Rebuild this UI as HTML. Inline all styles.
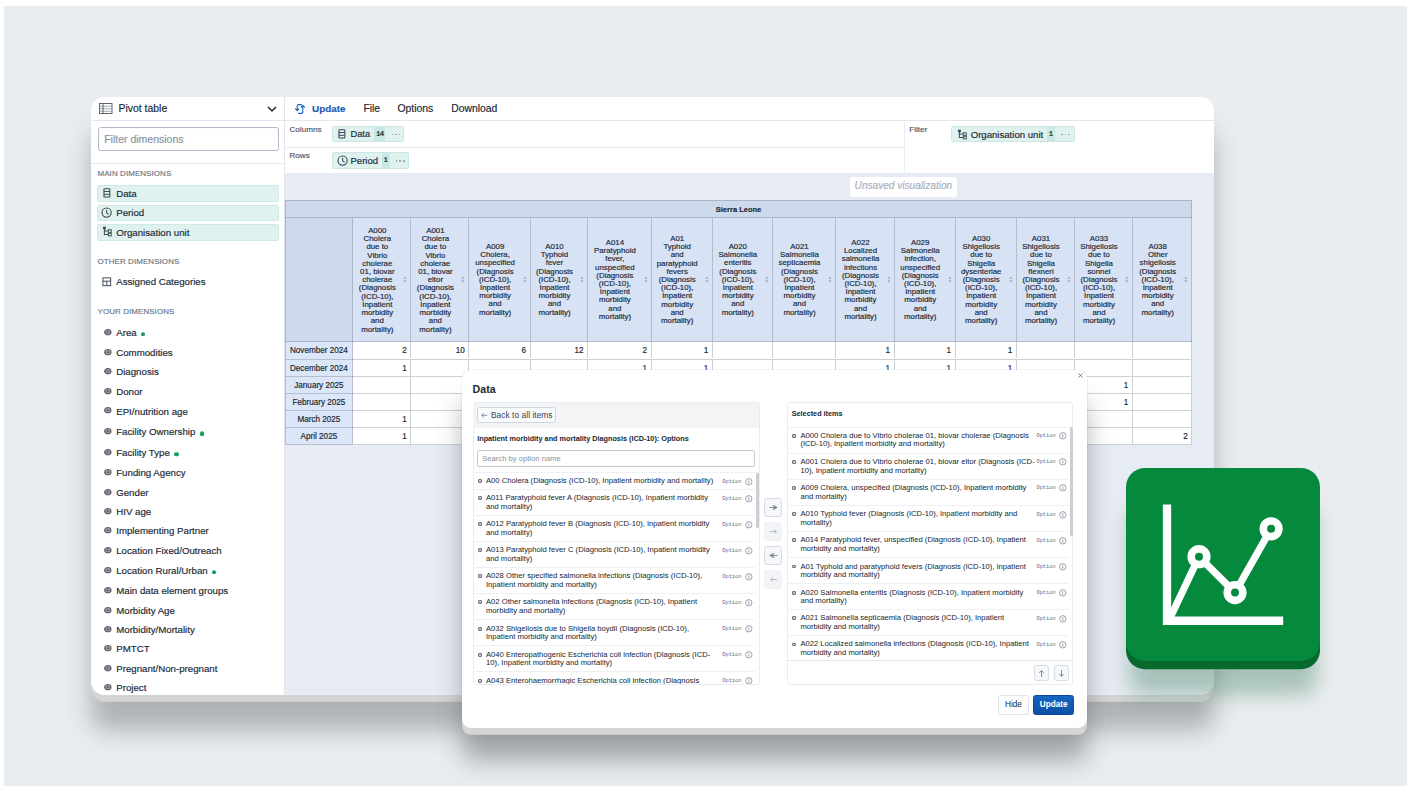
<!DOCTYPE html>
<html lang="en"><head><meta charset="utf-8"><title>Data Visualizer</title>
<style>*{box-sizing:border-box;margin:0;padding:0}
html,body{width:1412px;height:796px;overflow:hidden;background:#fff}
body{font-family:"Liberation Sans",sans-serif;color:#212934;position:relative}
.abs{position:absolute}
#bg{left:3.7px;top:5.5px;width:1402.9px;height:780px;background:#eaedf0}
#cardshadow{display:none}
#card{left:91px;top:97px;width:1123px;height:598px;background:#fff;border-radius:14px;box-shadow:0 6.8px 0 #d3d4d3,0 35px 24px rgba(58,62,68,.34)}
#cardin{left:0;top:0;width:1123px;height:598px;border-radius:14px;overflow:hidden}
#side{left:0;top:0;width:193.6px;height:598px;background:#fff;border-right:1px solid #e3e6ea}
#main{left:194px;top:0;width:929px;height:598px;background:#e7ebf3}
.t{position:absolute;white-space:nowrap;line-height:1;transform:translateY(-50%)}
body{-webkit-text-stroke:.17px currentColor}
.sec{font-size:7.95px;color:#6c7787;letter-spacing:.1px}
.dim{font-size:9.7px;color:#212934}
.chipL{position:absolute;left:5.9px;width:182px;height:16.5px;background:#dff2ef;border:.6px solid #cfe9e5;border-radius:1.5px}
svg{position:absolute;overflow:visible}
</style></head>
<body>
<div id="bg" class="abs"></div>
<div id="cardshadow" class="abs"></div>
<div id="card" class="abs"><div id="cardin" class="abs">
<div id="side" class="abs">
<svg style="left:8.3px;top:6.2px" width="13.5" height="11" viewBox="0 0 27 22"><rect x="1" y="1" width="25" height="20" fill="#fff" stroke="#5a6473" stroke-width="2"/><path d="M1 6.5H26M1 11.5H26M1 16.5H26" stroke="#8a93a0" stroke-width="1.6" fill="none"/><path d="M8 1V21" stroke="#5a6473" stroke-width="2"/></svg>
<div class="t" style="left:27.5px;top:12.4px;font-size:10.45px">Pivot table</div>
<svg style="left:176.3px;top:9.3px" width="10" height="6" viewBox="0 0 10 6"><path d="M1 1L5 4.8L9 1" fill="none" stroke="#2c3644" stroke-width="1.7"/></svg>
<div class="abs" style="left:0;top:23.2px;width:193px;height:1px;background:#e4e7eb"></div>
<div class="abs" style="left:6.5px;top:30.0px;width:181.2px;height:23.6px;border:1px solid #b3bccb;border-radius:2.5px;background:#fff;box-shadow:inset 0 0 1px rgba(48,54,60,.15)"></div>
<div class="t" style="left:13.2px;top:42.0px;font-size:10.5px;color:#8a94a3">Filter dimensions</div>
<div class="abs" style="left:0;top:66.0px;width:193px;height:1px;background:#e8ebee"></div>
<div class="t sec" style="left:6.5px;top:76.6px">MAIN DIMENSIONS</div>
<div class="chipL" style="top:88.2px"></div>
<svg style="left:11.1px;top:91.1px" width="9.8" height="9.8" viewBox="0 0 16 16"><rect x="3.2" y="1.2" width="9.6" height="13.6" rx="1" fill="none" stroke="#3a4a52" stroke-width="1.8"/><path d="M3.2 5.7H12.8M3.2 10.3H12.8" stroke="#3a4a52" stroke-width="1.6"/></svg>
<div class="t dim" style="left:25.2px;top:96.9px">Data</div>
<div class="chipL" style="top:107.6px"></div>
<svg style="left:10.3px;top:109.9px" width="11.2" height="11.2" viewBox="0 0 16 16"><circle cx="8" cy="8" r="6.6" fill="none" stroke="#3a4a52" stroke-width="1.6"/><path d="M8 4V8.3L10.8 10.4" fill="none" stroke="#3a4a52" stroke-width="1.5"/></svg>
<div class="t dim" style="left:25.2px;top:116.3px">Period</div>
<div class="chipL" style="top:127.1px"></div>
<svg style="left:10.6px;top:129.2px" width="10.8" height="10.8" viewBox="0 0 16 16"><path d="M3.5 4.5V12.5H9M3.5 7.5H9" fill="none" stroke="#3a4a52" stroke-width="1.5"/><rect x="1.5" y="1" width="4.2" height="3.8" fill="#3a4a52"/><rect x="9.3" y="5.6" width="4.4" height="3.8" fill="none" stroke="#3a4a52" stroke-width="1.4"/><rect x="9.3" y="10.8" width="4.4" height="3.8" fill="none" stroke="#3a4a52" stroke-width="1.4"/></svg>
<div class="t dim" style="left:25.2px;top:135.8px">Organisation unit</div>
<div class="t sec" style="left:6.5px;top:165.4px">OTHER DIMENSIONS</div>
<svg style="left:11.2px;top:180.4px" width="9.6" height="9.6" viewBox="0 0 16 16"><rect x="1.5" y="1.5" width="13" height="13" fill="none" stroke="#2f3a48" stroke-width="1.5"/><path d="M1.5 7H14.5M8 7V14.5" stroke="#2f3a48" stroke-width="1.5"/></svg>
<div class="t dim" style="left:25.2px;top:185.3px">Assigned Categories</div>
<div class="t sec" style="left:6.5px;top:214.8px">YOUR DIMENSIONS</div>
<svg style="left:12.5px;top:232.1px" width="7.6" height="6.4" viewBox="0 0 19 16"><ellipse cx="9.5" cy="8" rx="8" ry="6.6" fill="#a9aeb6" stroke="#5b626d" stroke-width="2.6"/><path d="M2 8H17M9.5 2V14" stroke="#5b626d" stroke-width="2.2"/></svg>
<div class="t dim" style="left:25.2px;top:236.2px">Area<span style="display:inline-block;width:4.2px;height:4.2px;border-radius:50%;background:#10a05a;margin-left:4.5px;vertical-align:-0.2px"></span></div>
<svg style="left:12.5px;top:252.0px" width="7.6" height="6.4" viewBox="0 0 19 16"><ellipse cx="9.5" cy="8" rx="8" ry="6.6" fill="#a9aeb6" stroke="#5b626d" stroke-width="2.6"/><path d="M2 8H17M9.5 2V14" stroke="#5b626d" stroke-width="2.2"/></svg>
<div class="t dim" style="left:25.2px;top:256.1px">Commodities</div>
<svg style="left:12.5px;top:271.3px" width="7.6" height="6.4" viewBox="0 0 19 16"><ellipse cx="9.5" cy="8" rx="8" ry="6.6" fill="#a9aeb6" stroke="#5b626d" stroke-width="2.6"/><path d="M2 8H17M9.5 2V14" stroke="#5b626d" stroke-width="2.2"/></svg>
<div class="t dim" style="left:25.2px;top:275.4px">Diagnosis</div>
<svg style="left:12.5px;top:290.7px" width="7.6" height="6.4" viewBox="0 0 19 16"><ellipse cx="9.5" cy="8" rx="8" ry="6.6" fill="#a9aeb6" stroke="#5b626d" stroke-width="2.6"/><path d="M2 8H17M9.5 2V14" stroke="#5b626d" stroke-width="2.2"/></svg>
<div class="t dim" style="left:25.2px;top:294.8px">Donor</div>
<svg style="left:12.5px;top:310.4px" width="7.6" height="6.4" viewBox="0 0 19 16"><ellipse cx="9.5" cy="8" rx="8" ry="6.6" fill="#a9aeb6" stroke="#5b626d" stroke-width="2.6"/><path d="M2 8H17M9.5 2V14" stroke="#5b626d" stroke-width="2.2"/></svg>
<div class="t dim" style="left:25.2px;top:314.5px">EPI/nutrition age</div>
<svg style="left:12.5px;top:331.3px" width="7.6" height="6.4" viewBox="0 0 19 16"><ellipse cx="9.5" cy="8" rx="8" ry="6.6" fill="#a9aeb6" stroke="#5b626d" stroke-width="2.6"/><path d="M2 8H17M9.5 2V14" stroke="#5b626d" stroke-width="2.2"/></svg>
<div class="t dim" style="left:25.2px;top:335.4px">Facility Ownership<span style="display:inline-block;width:4.2px;height:4.2px;border-radius:50%;background:#10a05a;margin-left:4.5px;vertical-align:-0.2px"></span></div>
<svg style="left:12.5px;top:351.8px" width="7.6" height="6.4" viewBox="0 0 19 16"><ellipse cx="9.5" cy="8" rx="8" ry="6.6" fill="#a9aeb6" stroke="#5b626d" stroke-width="2.6"/><path d="M2 8H17M9.5 2V14" stroke="#5b626d" stroke-width="2.2"/></svg>
<div class="t dim" style="left:25.2px;top:355.9px">Facility Type<span style="display:inline-block;width:4.2px;height:4.2px;border-radius:50%;background:#10a05a;margin-left:4.5px;vertical-align:-0.2px"></span></div>
<svg style="left:12.5px;top:372.0px" width="7.6" height="6.4" viewBox="0 0 19 16"><ellipse cx="9.5" cy="8" rx="8" ry="6.6" fill="#a9aeb6" stroke="#5b626d" stroke-width="2.6"/><path d="M2 8H17M9.5 2V14" stroke="#5b626d" stroke-width="2.2"/></svg>
<div class="t dim" style="left:25.2px;top:376.1px">Funding Agency</div>
<svg style="left:12.5px;top:391.7px" width="7.6" height="6.4" viewBox="0 0 19 16"><ellipse cx="9.5" cy="8" rx="8" ry="6.6" fill="#a9aeb6" stroke="#5b626d" stroke-width="2.6"/><path d="M2 8H17M9.5 2V14" stroke="#5b626d" stroke-width="2.2"/></svg>
<div class="t dim" style="left:25.2px;top:395.8px">Gender</div>
<svg style="left:12.5px;top:411.1px" width="7.6" height="6.4" viewBox="0 0 19 16"><ellipse cx="9.5" cy="8" rx="8" ry="6.6" fill="#a9aeb6" stroke="#5b626d" stroke-width="2.6"/><path d="M2 8H17M9.5 2V14" stroke="#5b626d" stroke-width="2.2"/></svg>
<div class="t dim" style="left:25.2px;top:415.2px">HIV age</div>
<svg style="left:12.5px;top:430.2px" width="7.6" height="6.4" viewBox="0 0 19 16"><ellipse cx="9.5" cy="8" rx="8" ry="6.6" fill="#a9aeb6" stroke="#5b626d" stroke-width="2.6"/><path d="M2 8H17M9.5 2V14" stroke="#5b626d" stroke-width="2.2"/></svg>
<div class="t dim" style="left:25.2px;top:434.3px">Implementing Partner</div>
<svg style="left:12.5px;top:449.8px" width="7.6" height="6.4" viewBox="0 0 19 16"><ellipse cx="9.5" cy="8" rx="8" ry="6.6" fill="#a9aeb6" stroke="#5b626d" stroke-width="2.6"/><path d="M2 8H17M9.5 2V14" stroke="#5b626d" stroke-width="2.2"/></svg>
<div class="t dim" style="left:25.2px;top:453.9px">Location Fixed/Outreach</div>
<svg style="left:12.5px;top:470.0px" width="7.6" height="6.4" viewBox="0 0 19 16"><ellipse cx="9.5" cy="8" rx="8" ry="6.6" fill="#a9aeb6" stroke="#5b626d" stroke-width="2.6"/><path d="M2 8H17M9.5 2V14" stroke="#5b626d" stroke-width="2.2"/></svg>
<div class="t dim" style="left:25.2px;top:474.1px">Location Rural/Urban<span style="display:inline-block;width:4.2px;height:4.2px;border-radius:50%;background:#10a05a;margin-left:4.5px;vertical-align:-0.2px"></span></div>
<svg style="left:12.5px;top:490.1px" width="7.6" height="6.4" viewBox="0 0 19 16"><ellipse cx="9.5" cy="8" rx="8" ry="6.6" fill="#a9aeb6" stroke="#5b626d" stroke-width="2.6"/><path d="M2 8H17M9.5 2V14" stroke="#5b626d" stroke-width="2.2"/></svg>
<div class="t dim" style="left:25.2px;top:494.2px">Main data element groups</div>
<svg style="left:12.5px;top:509.5px" width="7.6" height="6.4" viewBox="0 0 19 16"><ellipse cx="9.5" cy="8" rx="8" ry="6.6" fill="#a9aeb6" stroke="#5b626d" stroke-width="2.6"/><path d="M2 8H17M9.5 2V14" stroke="#5b626d" stroke-width="2.2"/></svg>
<div class="t dim" style="left:25.2px;top:513.6px">Morbidity Age</div>
<svg style="left:12.5px;top:528.8px" width="7.6" height="6.4" viewBox="0 0 19 16"><ellipse cx="9.5" cy="8" rx="8" ry="6.6" fill="#a9aeb6" stroke="#5b626d" stroke-width="2.6"/><path d="M2 8H17M9.5 2V14" stroke="#5b626d" stroke-width="2.2"/></svg>
<div class="t dim" style="left:25.2px;top:532.9px">Morbidity/Mortality</div>
<svg style="left:12.5px;top:548.1px" width="7.6" height="6.4" viewBox="0 0 19 16"><ellipse cx="9.5" cy="8" rx="8" ry="6.6" fill="#a9aeb6" stroke="#5b626d" stroke-width="2.6"/><path d="M2 8H17M9.5 2V14" stroke="#5b626d" stroke-width="2.2"/></svg>
<div class="t dim" style="left:25.2px;top:552.2px">PMTCT</div>
<svg style="left:12.5px;top:567.7px" width="7.6" height="6.4" viewBox="0 0 19 16"><ellipse cx="9.5" cy="8" rx="8" ry="6.6" fill="#a9aeb6" stroke="#5b626d" stroke-width="2.6"/><path d="M2 8H17M9.5 2V14" stroke="#5b626d" stroke-width="2.2"/></svg>
<div class="t dim" style="left:25.2px;top:571.8px">Pregnant/Non-pregnant</div>
<svg style="left:12.5px;top:587.1px" width="7.6" height="6.4" viewBox="0 0 19 16"><ellipse cx="9.5" cy="8" rx="8" ry="6.6" fill="#a9aeb6" stroke="#5b626d" stroke-width="2.6"/><path d="M2 8H17M9.5 2V14" stroke="#5b626d" stroke-width="2.2"/></svg>
<div class="t dim" style="left:25.2px;top:591.2px">Project</div>
</div>
<div id="main" class="abs">
<div class="abs" style="left:0;top:0;width:929px;height:24.2px;background:#fff;border-bottom:1px solid #e4e8ee"></div>
<svg style="left:9.2px;top:6.3px" width="12" height="12" viewBox="0 0 16 16"><g fill="none" stroke="#1a63c4" stroke-width="1.5"><path d="M10.5 2.2H6Q4.3 2.2 4.3 3.9V10.2M1.6 7.6L4.3 10.3L7 7.600000000000001"/><path d="M5.5 13.8H10Q11.7 13.8 11.7 12.1V3.4M9 6L11.7 3.3L14.4 6"/></g></svg>
<div class="t" style="left:27.0px;top:11.7px;font-size:9.9px;font-weight:bold;color:#1a5bb8">Update</div>
<div class="t" style="left:78.4px;top:11.7px;font-size:10.4px">File</div>
<div class="t" style="left:112.4px;top:11.7px;font-size:10.4px">Options</div>
<div class="t" style="left:166.2px;top:11.7px;font-size:10.4px">Download</div>
<div class="abs" style="left:0;top:23.6px;width:929px;height:52.2px;background:#fff"></div>
<div class="abs" style="left:0;top:49.6px;width:619.6px;height:1px;background:#e8ebf0"></div>
<div class="abs" style="left:619.3px;top:24.0px;width:1px;height:51.8px;background:#e8ebf0"></div>
<div class="t" style="left:4.5px;top:32.8px;font-size:8.1px;color:#4a5768">Columns</div>
<div class="t" style="left:4.5px;top:58.6px;font-size:8.1px;color:#4a5768">Rows</div>
<div class="t" style="left:624.3px;top:32.8px;font-size:8.1px;color:#4a5768">Filter</div>
<div class="abs" style="left:46.7px;top:29.1px;width:72.8px;height:16.4px;background:#dff2ef;border:.6px solid #cbe7e3;border-radius:2px"></div><svg style="left:52.3px;top:32.3px" width="9.8" height="9.8" viewBox="0 0 16 16"><rect x="3.2" y="1.2" width="9.6" height="13.6" rx="1" fill="none" stroke="#3a4a52" stroke-width="1.8"/><path d="M3.2 5.7H12.8M3.2 10.3H12.8" stroke="#3a4a52" stroke-width="1.6"/></svg><div class="t" style="left:65.5px;top:37.5px;font-size:9.25px;color:#212934">Data</div><div class="abs" style="left:88.8px;top:29.9px;width:11.6px;height:14.8px;background:#cbe9e4"></div><div class="t" style="left:90.9px;top:37.8px;font-size:7.4px;font-weight:bold;font-family:'Liberation Mono',monospace;color:#2b4a48;letter-spacing:-.5px">14</div><div class="abs" style="left:106.6px;top:36.7px;width:1.6px;height:1.6px;border-radius:50%;background:#8f9aa8"></div><div class="abs" style="left:110.2px;top:36.7px;width:1.6px;height:1.6px;border-radius:50%;background:#8f9aa8"></div><div class="abs" style="left:113.8px;top:36.7px;width:1.6px;height:1.6px;border-radius:50%;background:#8f9aa8"></div>
<div class="abs" style="left:46.7px;top:55.4px;width:77.6px;height:16.4px;background:#dff2ef;border:.6px solid #cbe7e3;border-radius:2px"></div><svg style="left:51.5px;top:58.0px" width="11.2" height="11.2" viewBox="0 0 16 16"><circle cx="8" cy="8" r="6.6" fill="none" stroke="#3a4a52" stroke-width="1.6"/><path d="M8 4V8.3L10.8 10.4" fill="none" stroke="#3a4a52" stroke-width="1.5"/></svg><div class="t" style="left:65.5px;top:63.8px;font-size:9.55px;color:#212934">Period</div><div class="abs" style="left:96.5px;top:56.2px;width:8.1px;height:14.8px;background:#cbe9e4"></div><div class="t" style="left:98.6px;top:64.1px;font-size:7.4px;font-weight:bold;font-family:'Liberation Mono',monospace;color:#2b4a48;letter-spacing:-.5px">1</div><div class="abs" style="left:110.8px;top:63.0px;width:1.6px;height:1.6px;border-radius:50%;background:#8f9aa8"></div><div class="abs" style="left:114.4px;top:63.0px;width:1.6px;height:1.6px;border-radius:50%;background:#8f9aa8"></div><div class="abs" style="left:118.0px;top:63.0px;width:1.6px;height:1.6px;border-radius:50%;background:#8f9aa8"></div>
<div class="abs" style="left:666.1px;top:29.1px;width:123.5px;height:16.4px;background:#dff2ef;border:.6px solid #cbe7e3;border-radius:2px"></div><svg style="left:672.0px;top:31.5px" width="10.8" height="10.8" viewBox="0 0 16 16"><path d="M3.5 4.5V12.5H9M3.5 7.5H9" fill="none" stroke="#3a4a52" stroke-width="1.5"/><rect x="1.5" y="1" width="4.2" height="3.8" fill="#3a4a52"/><rect x="9.3" y="5.6" width="4.4" height="3.8" fill="none" stroke="#3a4a52" stroke-width="1.4"/><rect x="9.3" y="10.8" width="4.4" height="3.8" fill="none" stroke="#3a4a52" stroke-width="1.4"/></svg><div class="t" style="left:685.7px;top:37.5px;font-size:9.60px;color:#212934">Organisation unit</div><div class="abs" style="left:761.7px;top:29.9px;width:8.1px;height:14.8px;background:#cbe9e4"></div><div class="t" style="left:763.8px;top:37.8px;font-size:7.4px;font-weight:bold;font-family:'Liberation Mono',monospace;color:#2b4a48;letter-spacing:-.5px">1</div><div class="abs" style="left:776.0px;top:36.7px;width:1.6px;height:1.6px;border-radius:50%;background:#8f9aa8"></div><div class="abs" style="left:779.6px;top:36.7px;width:1.6px;height:1.6px;border-radius:50%;background:#8f9aa8"></div><div class="abs" style="left:783.2px;top:36.7px;width:1.6px;height:1.6px;border-radius:50%;background:#8f9aa8"></div>
<div class="abs" style="left:565.0px;top:80.0px;width:107.2px;height:19.8px;background:#fff;border-radius:3px"></div>
<div class="t" style="left:569.6px;top:89.4px;font-size:10.1px;font-style:italic;color:#a6b0bd">Unsaved visualization</div>
<div class="abs" style="left:0.0px;top:103.4px;width:906.8px;height:17.2px;background:#cddaec"></div>
<div class="abs" style="left:0.0px;top:120.6px;width:67.8px;height:124.2px;background:#cddaec"></div>
<div class="abs" style="left:67.8px;top:120.6px;width:839.0px;height:124.2px;background:#d7e2f5"></div>
<div class="abs" style="left:0.0px;top:244.8px;width:67.8px;height:103.0px;background:#dbe6f8"></div>
<div class="abs" style="left:67.8px;top:244.8px;width:839.0px;height:103.0px;background:#fff"></div>
<div class="t" style="left:453.5px;top:112.5px;font-size:7.5px;font-weight:bold;color:#212934;transform:translate(-50%,-50%)">Sierra Leone</div>
<div class="abs" style="left:0.0px;top:102.8px;width:906.8px;height:1.3px;background:rgba(90,100,110,.30)"></div>
<div class="abs" style="left:0.0px;top:119.9px;width:906.8px;height:1.3px;background:rgba(90,100,110,.30)"></div>
<div class="abs" style="left:0.0px;top:244.2px;width:906.8px;height:1.3px;background:rgba(90,100,110,.30)"></div>
<div class="abs" style="left:-0.3px;top:104.1px;width:1.3px;height:244.4px;background:rgba(90,100,110,.30)"></div>
<div class="abs" style="left:906.1px;top:104.1px;width:1.3px;height:244.4px;background:rgba(90,100,110,.30)"></div>
<div class="abs" style="left:67.2px;top:121.2px;width:1.3px;height:225.9px;background:rgba(90,100,110,.30)"></div>
<div class="abs" style="left:125.2px;top:121.2px;width:1.3px;height:122.9px;background:rgba(90,100,110,.30)"></div>
<div class="abs" style="left:125.2px;top:245.4px;width:1.3px;height:16.1px;background:rgba(90,100,110,.30)"></div>
<div class="abs" style="left:125.2px;top:262.8px;width:1.3px;height:15.8px;background:rgba(90,100,110,.30)"></div>
<div class="abs" style="left:125.2px;top:279.9px;width:1.3px;height:16.0px;background:rgba(90,100,110,.30)"></div>
<div class="abs" style="left:125.2px;top:297.2px;width:1.3px;height:15.8px;background:rgba(90,100,110,.30)"></div>
<div class="abs" style="left:125.2px;top:314.3px;width:1.3px;height:15.8px;background:rgba(90,100,110,.30)"></div>
<div class="abs" style="left:125.2px;top:331.4px;width:1.3px;height:15.7px;background:rgba(90,100,110,.30)"></div>
<div class="abs" style="left:92.3px;top:182.9px;width:90px;margin-left:-45px;text-align:center;font-size:7.85px;line-height:8.22px;color:#212934;transform:translateY(-50%)">A000<br>Cholera<br>due to<br>Vibrio<br>cholerae<br>01, biovar<br>cholerae<br>(Diagnosis<br>(ICD-10),<br>Inpatient<br>morbidity<br>and<br>mortality)</div>
<svg style="left:118.2px;top:179.1px" width="3.8" height="7" viewBox="0 0 36 64"><path d="M18 2L34 26H2Z M18 62L34 38H2Z" fill="#a3adbd"/></svg>
<div class="abs" style="left:183.2px;top:121.2px;width:1.3px;height:122.9px;background:rgba(90,100,110,.30)"></div>
<div class="abs" style="left:183.2px;top:245.4px;width:1.3px;height:16.1px;background:rgba(90,100,110,.30)"></div>
<div class="abs" style="left:183.2px;top:262.8px;width:1.3px;height:15.8px;background:rgba(90,100,110,.30)"></div>
<div class="abs" style="left:183.2px;top:279.9px;width:1.3px;height:16.0px;background:rgba(90,100,110,.30)"></div>
<div class="abs" style="left:183.2px;top:297.2px;width:1.3px;height:15.8px;background:rgba(90,100,110,.30)"></div>
<div class="abs" style="left:183.2px;top:314.3px;width:1.3px;height:15.8px;background:rgba(90,100,110,.30)"></div>
<div class="abs" style="left:183.2px;top:331.4px;width:1.3px;height:15.7px;background:rgba(90,100,110,.30)"></div>
<div class="abs" style="left:150.4px;top:182.9px;width:90px;margin-left:-45px;text-align:center;font-size:7.85px;line-height:8.22px;color:#212934;transform:translateY(-50%)">A001<br>Cholera<br>due to<br>Vibrio<br>cholerae<br>01, biovar<br>eltor<br>(Diagnosis<br>(ICD-10),<br>Inpatient<br>morbidity<br>and<br>mortality)</div>
<svg style="left:176.3px;top:179.1px" width="3.8" height="7" viewBox="0 0 36 64"><path d="M18 2L34 26H2Z M18 62L34 38H2Z" fill="#a3adbd"/></svg>
<div class="abs" style="left:244.6px;top:121.2px;width:1.3px;height:122.9px;background:rgba(90,100,110,.30)"></div>
<div class="abs" style="left:244.6px;top:245.4px;width:1.3px;height:16.1px;background:rgba(90,100,110,.30)"></div>
<div class="abs" style="left:244.6px;top:262.8px;width:1.3px;height:15.8px;background:rgba(90,100,110,.30)"></div>
<div class="abs" style="left:244.6px;top:279.9px;width:1.3px;height:16.0px;background:rgba(90,100,110,.30)"></div>
<div class="abs" style="left:244.6px;top:297.2px;width:1.3px;height:15.8px;background:rgba(90,100,110,.30)"></div>
<div class="abs" style="left:244.6px;top:314.3px;width:1.3px;height:15.8px;background:rgba(90,100,110,.30)"></div>
<div class="abs" style="left:244.6px;top:331.4px;width:1.3px;height:15.7px;background:rgba(90,100,110,.30)"></div>
<div class="abs" style="left:210.1px;top:182.9px;width:90px;margin-left:-45px;text-align:center;font-size:7.85px;line-height:8.22px;color:#212934;transform:translateY(-50%)">A009<br>Cholera,<br>unspecified<br>(Diagnosis<br>(ICD-10),<br>Inpatient<br>morbidity<br>and<br>mortality)</div>
<svg style="left:237.6px;top:179.1px" width="3.8" height="7" viewBox="0 0 36 64"><path d="M18 2L34 26H2Z M18 62L34 38H2Z" fill="#a3adbd"/></svg>
<div class="abs" style="left:302.1px;top:121.2px;width:1.3px;height:122.9px;background:rgba(90,100,110,.30)"></div>
<div class="abs" style="left:302.1px;top:245.4px;width:1.3px;height:16.1px;background:rgba(90,100,110,.30)"></div>
<div class="abs" style="left:302.1px;top:262.8px;width:1.3px;height:15.8px;background:rgba(90,100,110,.30)"></div>
<div class="abs" style="left:302.1px;top:279.9px;width:1.3px;height:16.0px;background:rgba(90,100,110,.30)"></div>
<div class="abs" style="left:302.1px;top:297.2px;width:1.3px;height:15.8px;background:rgba(90,100,110,.30)"></div>
<div class="abs" style="left:302.1px;top:314.3px;width:1.3px;height:15.8px;background:rgba(90,100,110,.30)"></div>
<div class="abs" style="left:302.1px;top:331.4px;width:1.3px;height:15.7px;background:rgba(90,100,110,.30)"></div>
<div class="abs" style="left:269.5px;top:182.9px;width:90px;margin-left:-45px;text-align:center;font-size:7.85px;line-height:8.22px;color:#212934;transform:translateY(-50%)">A010<br>Typhoid<br>fever<br>(Diagnosis<br>(ICD-10),<br>Inpatient<br>morbidity<br>and<br>mortality)</div>
<svg style="left:295.1px;top:179.1px" width="3.8" height="7" viewBox="0 0 36 64"><path d="M18 2L34 26H2Z M18 62L34 38H2Z" fill="#a3adbd"/></svg>
<div class="abs" style="left:365.5px;top:121.2px;width:1.3px;height:122.9px;background:rgba(90,100,110,.30)"></div>
<div class="abs" style="left:365.5px;top:245.4px;width:1.3px;height:16.1px;background:rgba(90,100,110,.30)"></div>
<div class="abs" style="left:365.5px;top:262.8px;width:1.3px;height:15.8px;background:rgba(90,100,110,.30)"></div>
<div class="abs" style="left:365.5px;top:279.9px;width:1.3px;height:16.0px;background:rgba(90,100,110,.30)"></div>
<div class="abs" style="left:365.5px;top:297.2px;width:1.3px;height:15.8px;background:rgba(90,100,110,.30)"></div>
<div class="abs" style="left:365.5px;top:314.3px;width:1.3px;height:15.8px;background:rgba(90,100,110,.30)"></div>
<div class="abs" style="left:365.5px;top:331.4px;width:1.3px;height:15.7px;background:rgba(90,100,110,.30)"></div>
<div class="abs" style="left:329.9px;top:182.9px;width:90px;margin-left:-45px;text-align:center;font-size:7.85px;line-height:8.22px;color:#212934;transform:translateY(-50%)">A014<br>Paratyphoid<br>fever,<br>unspecified<br>(Diagnosis<br>(ICD-10),<br>Inpatient<br>morbidity<br>and<br>mortality)</div>
<svg style="left:358.5px;top:179.1px" width="3.8" height="7" viewBox="0 0 36 64"><path d="M18 2L34 26H2Z M18 62L34 38H2Z" fill="#a3adbd"/></svg>
<div class="abs" style="left:426.6px;top:121.2px;width:1.3px;height:122.9px;background:rgba(90,100,110,.30)"></div>
<div class="abs" style="left:426.6px;top:245.4px;width:1.3px;height:16.1px;background:rgba(90,100,110,.30)"></div>
<div class="abs" style="left:426.6px;top:262.8px;width:1.3px;height:15.8px;background:rgba(90,100,110,.30)"></div>
<div class="abs" style="left:426.6px;top:279.9px;width:1.3px;height:16.0px;background:rgba(90,100,110,.30)"></div>
<div class="abs" style="left:426.6px;top:297.2px;width:1.3px;height:15.8px;background:rgba(90,100,110,.30)"></div>
<div class="abs" style="left:426.6px;top:314.3px;width:1.3px;height:15.8px;background:rgba(90,100,110,.30)"></div>
<div class="abs" style="left:426.6px;top:331.4px;width:1.3px;height:15.7px;background:rgba(90,100,110,.30)"></div>
<div class="abs" style="left:392.2px;top:182.9px;width:90px;margin-left:-45px;text-align:center;font-size:7.85px;line-height:8.22px;color:#212934;transform:translateY(-50%)">A01<br>Typhoid<br>and<br>paratyphoid<br>fevers<br>(Diagnosis<br>(ICD-10),<br>Inpatient<br>morbidity<br>and<br>mortality)</div>
<svg style="left:419.7px;top:179.1px" width="3.8" height="7" viewBox="0 0 36 64"><path d="M18 2L34 26H2Z M18 62L34 38H2Z" fill="#a3adbd"/></svg>
<div class="abs" style="left:486.6px;top:121.2px;width:1.3px;height:122.9px;background:rgba(90,100,110,.30)"></div>
<div class="abs" style="left:486.6px;top:245.4px;width:1.3px;height:16.1px;background:rgba(90,100,110,.30)"></div>
<div class="abs" style="left:486.6px;top:262.8px;width:1.3px;height:15.8px;background:rgba(90,100,110,.30)"></div>
<div class="abs" style="left:486.6px;top:279.9px;width:1.3px;height:16.0px;background:rgba(90,100,110,.30)"></div>
<div class="abs" style="left:486.6px;top:297.2px;width:1.3px;height:15.8px;background:rgba(90,100,110,.30)"></div>
<div class="abs" style="left:486.6px;top:314.3px;width:1.3px;height:15.8px;background:rgba(90,100,110,.30)"></div>
<div class="abs" style="left:486.6px;top:331.4px;width:1.3px;height:15.7px;background:rgba(90,100,110,.30)"></div>
<div class="abs" style="left:452.8px;top:182.9px;width:90px;margin-left:-45px;text-align:center;font-size:7.85px;line-height:8.22px;color:#212934;transform:translateY(-50%)">A020<br>Salmonella<br>enteritis<br>(Diagnosis<br>(ICD-10),<br>Inpatient<br>morbidity<br>and<br>mortality)</div>
<svg style="left:479.7px;top:179.1px" width="3.8" height="7" viewBox="0 0 36 64"><path d="M18 2L34 26H2Z M18 62L34 38H2Z" fill="#a3adbd"/></svg>
<div class="abs" style="left:550.1px;top:121.2px;width:1.3px;height:122.9px;background:rgba(90,100,110,.30)"></div>
<div class="abs" style="left:550.1px;top:245.4px;width:1.3px;height:16.1px;background:rgba(90,100,110,.30)"></div>
<div class="abs" style="left:550.1px;top:262.8px;width:1.3px;height:15.8px;background:rgba(90,100,110,.30)"></div>
<div class="abs" style="left:550.1px;top:279.9px;width:1.3px;height:16.0px;background:rgba(90,100,110,.30)"></div>
<div class="abs" style="left:550.1px;top:297.2px;width:1.3px;height:15.8px;background:rgba(90,100,110,.30)"></div>
<div class="abs" style="left:550.1px;top:314.3px;width:1.3px;height:15.8px;background:rgba(90,100,110,.30)"></div>
<div class="abs" style="left:550.1px;top:331.4px;width:1.3px;height:15.7px;background:rgba(90,100,110,.30)"></div>
<div class="abs" style="left:514.5px;top:182.9px;width:90px;margin-left:-45px;text-align:center;font-size:7.85px;line-height:8.22px;color:#212934;transform:translateY(-50%)">A021<br>Salmonella<br>septicaemia<br>(Diagnosis<br>(ICD-10),<br>Inpatient<br>morbidity<br>and<br>mortality)</div>
<svg style="left:543.1px;top:179.1px" width="3.8" height="7" viewBox="0 0 36 64"><path d="M18 2L34 26H2Z M18 62L34 38H2Z" fill="#a3adbd"/></svg>
<div class="abs" style="left:608.6px;top:121.2px;width:1.3px;height:122.9px;background:rgba(90,100,110,.30)"></div>
<div class="abs" style="left:608.6px;top:245.4px;width:1.3px;height:16.1px;background:rgba(90,100,110,.30)"></div>
<div class="abs" style="left:608.6px;top:262.8px;width:1.3px;height:15.8px;background:rgba(90,100,110,.30)"></div>
<div class="abs" style="left:608.6px;top:279.9px;width:1.3px;height:16.0px;background:rgba(90,100,110,.30)"></div>
<div class="abs" style="left:608.6px;top:297.2px;width:1.3px;height:15.8px;background:rgba(90,100,110,.30)"></div>
<div class="abs" style="left:608.6px;top:314.3px;width:1.3px;height:15.8px;background:rgba(90,100,110,.30)"></div>
<div class="abs" style="left:608.6px;top:331.4px;width:1.3px;height:15.7px;background:rgba(90,100,110,.30)"></div>
<div class="abs" style="left:575.5px;top:182.9px;width:90px;margin-left:-45px;text-align:center;font-size:7.85px;line-height:8.22px;color:#212934;transform:translateY(-50%)">A022<br>Localized<br>salmonella<br>infections<br>(Diagnosis<br>(ICD-10),<br>Inpatient<br>morbidity<br>and<br>mortality)</div>
<svg style="left:601.6px;top:179.1px" width="3.8" height="7" viewBox="0 0 36 64"><path d="M18 2L34 26H2Z M18 62L34 38H2Z" fill="#a3adbd"/></svg>
<div class="abs" style="left:669.5px;top:121.2px;width:1.3px;height:122.9px;background:rgba(90,100,110,.30)"></div>
<div class="abs" style="left:669.5px;top:245.4px;width:1.3px;height:16.1px;background:rgba(90,100,110,.30)"></div>
<div class="abs" style="left:669.5px;top:262.8px;width:1.3px;height:15.8px;background:rgba(90,100,110,.30)"></div>
<div class="abs" style="left:669.5px;top:279.9px;width:1.3px;height:16.0px;background:rgba(90,100,110,.30)"></div>
<div class="abs" style="left:669.5px;top:297.2px;width:1.3px;height:15.8px;background:rgba(90,100,110,.30)"></div>
<div class="abs" style="left:669.5px;top:314.3px;width:1.3px;height:15.8px;background:rgba(90,100,110,.30)"></div>
<div class="abs" style="left:669.5px;top:331.4px;width:1.3px;height:15.7px;background:rgba(90,100,110,.30)"></div>
<div class="abs" style="left:635.2px;top:182.9px;width:90px;margin-left:-45px;text-align:center;font-size:7.85px;line-height:8.22px;color:#212934;transform:translateY(-50%)">A029<br>Salmonella<br>infection,<br>unspecified<br>(Diagnosis<br>(ICD-10),<br>Inpatient<br>morbidity<br>and<br>mortality)</div>
<svg style="left:662.5px;top:179.1px" width="3.8" height="7" viewBox="0 0 36 64"><path d="M18 2L34 26H2Z M18 62L34 38H2Z" fill="#a3adbd"/></svg>
<div class="abs" style="left:730.8px;top:121.2px;width:1.3px;height:122.9px;background:rgba(90,100,110,.30)"></div>
<div class="abs" style="left:730.8px;top:245.4px;width:1.3px;height:16.1px;background:rgba(90,100,110,.30)"></div>
<div class="abs" style="left:730.8px;top:262.8px;width:1.3px;height:15.8px;background:rgba(90,100,110,.30)"></div>
<div class="abs" style="left:730.8px;top:279.9px;width:1.3px;height:16.0px;background:rgba(90,100,110,.30)"></div>
<div class="abs" style="left:730.8px;top:297.2px;width:1.3px;height:15.8px;background:rgba(90,100,110,.30)"></div>
<div class="abs" style="left:730.8px;top:314.3px;width:1.3px;height:15.8px;background:rgba(90,100,110,.30)"></div>
<div class="abs" style="left:730.8px;top:331.4px;width:1.3px;height:15.7px;background:rgba(90,100,110,.30)"></div>
<div class="abs" style="left:696.2px;top:182.9px;width:90px;margin-left:-45px;text-align:center;font-size:7.85px;line-height:8.22px;color:#212934;transform:translateY(-50%)">A030<br>Shigellosis<br>due to<br>Shigella<br>dysenteriae<br>(Diagnosis<br>(ICD-10),<br>Inpatient<br>morbidity<br>and<br>mortality)</div>
<svg style="left:723.8px;top:179.1px" width="3.8" height="7" viewBox="0 0 36 64"><path d="M18 2L34 26H2Z M18 62L34 38H2Z" fill="#a3adbd"/></svg>
<div class="abs" style="left:788.9px;top:121.2px;width:1.3px;height:122.9px;background:rgba(90,100,110,.30)"></div>
<div class="abs" style="left:788.9px;top:245.4px;width:1.3px;height:16.1px;background:rgba(90,100,110,.30)"></div>
<div class="abs" style="left:788.9px;top:262.8px;width:1.3px;height:15.8px;background:rgba(90,100,110,.30)"></div>
<div class="abs" style="left:788.9px;top:279.9px;width:1.3px;height:16.0px;background:rgba(90,100,110,.30)"></div>
<div class="abs" style="left:788.9px;top:297.2px;width:1.3px;height:15.8px;background:rgba(90,100,110,.30)"></div>
<div class="abs" style="left:788.9px;top:314.3px;width:1.3px;height:15.8px;background:rgba(90,100,110,.30)"></div>
<div class="abs" style="left:788.9px;top:331.4px;width:1.3px;height:15.7px;background:rgba(90,100,110,.30)"></div>
<div class="abs" style="left:756.0px;top:182.9px;width:90px;margin-left:-45px;text-align:center;font-size:7.85px;line-height:8.22px;color:#212934;transform:translateY(-50%)">A031<br>Shigellosis<br>due to<br>Shigella<br>flexneri<br>(Diagnosis<br>(ICD-10),<br>Inpatient<br>morbidity<br>and<br>mortality)</div>
<svg style="left:782.0px;top:179.1px" width="3.8" height="7" viewBox="0 0 36 64"><path d="M18 2L34 26H2Z M18 62L34 38H2Z" fill="#a3adbd"/></svg>
<div class="abs" style="left:846.8px;top:121.2px;width:1.3px;height:122.9px;background:rgba(90,100,110,.30)"></div>
<div class="abs" style="left:846.8px;top:245.4px;width:1.3px;height:16.1px;background:rgba(90,100,110,.30)"></div>
<div class="abs" style="left:846.8px;top:262.8px;width:1.3px;height:15.8px;background:rgba(90,100,110,.30)"></div>
<div class="abs" style="left:846.8px;top:279.9px;width:1.3px;height:16.0px;background:rgba(90,100,110,.30)"></div>
<div class="abs" style="left:846.8px;top:297.2px;width:1.3px;height:15.8px;background:rgba(90,100,110,.30)"></div>
<div class="abs" style="left:846.8px;top:314.3px;width:1.3px;height:15.8px;background:rgba(90,100,110,.30)"></div>
<div class="abs" style="left:846.8px;top:331.4px;width:1.3px;height:15.7px;background:rgba(90,100,110,.30)"></div>
<div class="abs" style="left:814.0px;top:182.9px;width:90px;margin-left:-45px;text-align:center;font-size:7.85px;line-height:8.22px;color:#212934;transform:translateY(-50%)">A033<br>Shigellosis<br>due to<br>Shigella<br>sonnei<br>(Diagnosis<br>(ICD-10),<br>Inpatient<br>morbidity<br>and<br>mortality)</div>
<svg style="left:839.9px;top:179.1px" width="3.8" height="7" viewBox="0 0 36 64"><path d="M18 2L34 26H2Z M18 62L34 38H2Z" fill="#a3adbd"/></svg>
<div class="abs" style="left:872.7px;top:182.9px;width:90px;margin-left:-45px;text-align:center;font-size:7.85px;line-height:8.22px;color:#212934;transform:translateY(-50%)">A038<br>Other<br>shigellosis<br>(Diagnosis<br>(ICD-10),<br>Inpatient<br>morbidity<br>and<br>mortality)</div>
<svg style="left:899.2px;top:179.1px" width="3.8" height="7" viewBox="0 0 36 64"><path d="M18 2L34 26H2Z M18 62L34 38H2Z" fill="#a3adbd"/></svg>
<div class="abs" style="left:0.9px;top:261.6px;width:905.2px;height:1.3px;background:rgba(90,100,110,.30)"></div>
<div class="t" style="left:33.9px;top:254.3px;font-size:8.15px;transform:translate(-50%,-50%)">November 2024</div>
<div class="t" style="left:121.7px;top:254.4px;font-size:8.15px;transform:translate(-100%,-50%)">2</div>
<div class="t" style="left:179.8px;top:254.4px;font-size:8.15px;transform:translate(-100%,-50%)">10</div>
<div class="t" style="left:241.1px;top:254.4px;font-size:8.15px;transform:translate(-100%,-50%)">6</div>
<div class="t" style="left:298.6px;top:254.4px;font-size:8.15px;transform:translate(-100%,-50%)">12</div>
<div class="t" style="left:362.0px;top:254.4px;font-size:8.15px;transform:translate(-100%,-50%)">2</div>
<div class="t" style="left:423.2px;top:254.4px;font-size:8.15px;transform:translate(-100%,-50%)">1</div>
<div class="t" style="left:605.1px;top:254.4px;font-size:8.15px;transform:translate(-100%,-50%)">1</div>
<div class="t" style="left:666.0px;top:254.4px;font-size:8.15px;transform:translate(-100%,-50%)">1</div>
<div class="t" style="left:727.3px;top:254.4px;font-size:8.15px;transform:translate(-100%,-50%)">1</div>
<div class="abs" style="left:0.9px;top:278.7px;width:905.2px;height:1.3px;background:rgba(90,100,110,.30)"></div>
<div class="t" style="left:33.9px;top:271.6px;font-size:8.15px;transform:translate(-50%,-50%)">December 2024</div>
<div class="t" style="left:121.7px;top:271.7px;font-size:8.15px;transform:translate(-100%,-50%)">1</div>
<div class="t" style="left:362.0px;top:271.7px;font-size:8.15px;transform:translate(-100%,-50%)">1</div>
<div class="t" style="left:423.2px;top:271.7px;font-size:8.15px;transform:translate(-100%,-50%)">1</div>
<div class="t" style="left:605.1px;top:271.7px;font-size:8.15px;transform:translate(-100%,-50%)">1</div>
<div class="t" style="left:666.0px;top:271.7px;font-size:8.15px;transform:translate(-100%,-50%)">1</div>
<div class="t" style="left:727.3px;top:271.7px;font-size:8.15px;transform:translate(-100%,-50%)">1</div>
<div class="abs" style="left:0.9px;top:296.0px;width:905.2px;height:1.3px;background:rgba(90,100,110,.30)"></div>
<div class="t" style="left:33.9px;top:288.8px;font-size:8.15px;transform:translate(-50%,-50%)">January 2025</div>
<div class="t" style="left:843.4px;top:288.9px;font-size:8.15px;transform:translate(-100%,-50%)">1</div>
<div class="abs" style="left:0.9px;top:313.1px;width:905.2px;height:1.3px;background:rgba(90,100,110,.30)"></div>
<div class="t" style="left:33.9px;top:305.9px;font-size:8.15px;transform:translate(-50%,-50%)">February 2025</div>
<div class="t" style="left:843.4px;top:306.1px;font-size:8.15px;transform:translate(-100%,-50%)">1</div>
<div class="abs" style="left:0.9px;top:330.2px;width:905.2px;height:1.3px;background:rgba(90,100,110,.30)"></div>
<div class="t" style="left:33.9px;top:323.1px;font-size:8.15px;transform:translate(-50%,-50%)">March 2025</div>
<div class="t" style="left:121.7px;top:323.2px;font-size:8.15px;transform:translate(-100%,-50%)">1</div>
<div class="abs" style="left:0.9px;top:347.2px;width:905.2px;height:1.3px;background:rgba(90,100,110,.30)"></div>
<div class="t" style="left:33.9px;top:340.1px;font-size:8.15px;transform:translate(-50%,-50%)">April 2025</div>
<div class="t" style="left:121.7px;top:340.2px;font-size:8.15px;transform:translate(-100%,-50%)">1</div>
<div class="t" style="left:902.7px;top:340.2px;font-size:8.15px;transform:translate(-100%,-50%)">2</div>
</div>
</div></div>
<div class="abs" id="modal" style="-webkit-text-stroke:.03px currentColor;left:461.5px;top:369.7px;width:625.5px;height:358.5px;background:#fff;border-radius:9px;box-shadow:0 6.8px 0 #d4d5d4,0 33px 24px rgba(58,62,68,.38),0 0 0 .6px rgba(120,130,140,.16)">
<div class="t" style="left:11.1px;top:19.5px;font-size:10.6px;font-weight:bold;color:#212934">Data</div>
<svg style="left:616.9px;top:3.6px" width="5" height="5" viewBox="0 0 10 10"><path d="M1 1L9 9M9 1L1 9" stroke="#4a5768" stroke-width="1.5"/></svg>
<div class="abs" style="left:11.0px;top:32.7px;width:287.0px;height:282.9px;border:.8px solid #e9ecf0;border-radius:2.5px;overflow:hidden;background:#fff"></div>
<div class="abs" style="left:11.6px;top:33.3px;width:285.8px;height:25.0px;background:#f2f4f6;border-radius:2px 2px 0 0"></div>
<div class="abs" style="left:15.8px;top:37.8px;width:78.7px;height:15.1px;background:#f9fafb;border:.8px solid #cfd5dc;border-radius:2.5px"></div>
<svg style="left:19.8px;top:42.1px" width="6.6" height="6.6" viewBox="0 0 16 16"><path d="M15 8H2M7 3L2 8L7 13" fill="none" stroke="#4a5768" stroke-width="1.6"/></svg>
<div class="t" style="left:29.5px;top:45.3px;font-size:8.35px;color:#3a4553;letter-spacing:.05px">Back to all items</div>
<div class="t" style="left:15.7px;top:69.3px;font-size:7.27px;font-weight:bold;color:#212934">Inpatient morbidity and mortality Diagnosis (ICD-10): Options</div>
<div class="abs" style="left:15.8px;top:80.3px;width:277.6px;height:17.5px;background:#fff;border:.8px solid #c3cbd6;border-radius:2.2px;box-shadow:inset 0 0 1px rgba(48,54,60,.12)"></div>
<div class="t" style="left:20.7px;top:88.9px;font-size:7.65px;color:#8a94a3">Search by option name</div>
<div class="abs" style="left:11.0px;top:102.3px;width:287.0px;height:.8px;background:#eef0f3"></div>
<div class="abs" style="left:0;top:0;width:298.0px;height:314.8px;overflow:hidden">
<div class="abs" style="left:16.3px;top:109.6px;width:4.4px;height:3.8px;border:1px solid #6a7280;background:#c3c7cd;border-radius:1px"></div>
<div class="t" style="left:24.5px;top:111.5px;font-size:7.65px;color:#212934">A00 Cholera (Diagnosis (ICD-10), Inpatient morbidity and mortality)</div>
<div class="t" style="left:260.8px;top:113.0px;font-size:5.3px;font-family:'Liberation Mono',monospace;color:#5f6b7c;letter-spacing:0;-webkit-text-stroke:0">Option</div>
<svg style="left:283.5px;top:108.0px" width="7.6" height="7.6" viewBox="0 0 16 16"><circle cx="8" cy="8" r="6.7" fill="none" stroke="#5e6a7b" stroke-width="1.3"/><path d="M8 7V11.6" stroke="#5e6a7b" stroke-width="1.5"/><circle cx="8" cy="4.8" r="1" fill="#5e6a7b"/></svg>
<div class="abs" style="left:11.8px;top:119.2px;width:281.7px;height:.8px;background:#eef0f3"></div>
<div class="abs" style="left:16.3px;top:126.6px;width:4.4px;height:3.8px;border:1px solid #6a7280;background:#c3c7cd;border-radius:1px"></div>
<div class="t" style="left:24.5px;top:128.5px;font-size:7.65px;color:#212934">A011 Paratyphoid fever A (Diagnosis (ICD-10), Inpatient morbidity</div>
<div class="t" style="left:24.5px;top:137.2px;font-size:7.65px;color:#212934">and mortality)</div>
<div class="t" style="left:260.8px;top:130.0px;font-size:5.3px;font-family:'Liberation Mono',monospace;color:#5f6b7c;letter-spacing:0;-webkit-text-stroke:0">Option</div>
<svg style="left:283.5px;top:125.0px" width="7.6" height="7.6" viewBox="0 0 16 16"><circle cx="8" cy="8" r="6.7" fill="none" stroke="#5e6a7b" stroke-width="1.3"/><path d="M8 7V11.6" stroke="#5e6a7b" stroke-width="1.5"/><circle cx="8" cy="4.8" r="1" fill="#5e6a7b"/></svg>
<div class="abs" style="left:11.8px;top:145.4px;width:281.7px;height:.8px;background:#eef0f3"></div>
<div class="abs" style="left:16.3px;top:152.8px;width:4.4px;height:3.8px;border:1px solid #6a7280;background:#c3c7cd;border-radius:1px"></div>
<div class="t" style="left:24.5px;top:154.7px;font-size:7.65px;color:#212934">A012 Paratyphoid fever B (Diagnosis (ICD-10), Inpatient morbidity</div>
<div class="t" style="left:24.5px;top:163.4px;font-size:7.65px;color:#212934">and mortality)</div>
<div class="t" style="left:260.8px;top:156.2px;font-size:5.3px;font-family:'Liberation Mono',monospace;color:#5f6b7c;letter-spacing:0;-webkit-text-stroke:0">Option</div>
<svg style="left:283.5px;top:151.2px" width="7.6" height="7.6" viewBox="0 0 16 16"><circle cx="8" cy="8" r="6.7" fill="none" stroke="#5e6a7b" stroke-width="1.3"/><path d="M8 7V11.6" stroke="#5e6a7b" stroke-width="1.5"/><circle cx="8" cy="4.8" r="1" fill="#5e6a7b"/></svg>
<div class="abs" style="left:11.8px;top:171.4px;width:281.7px;height:.8px;background:#eef0f3"></div>
<div class="abs" style="left:16.3px;top:178.8px;width:4.4px;height:3.8px;border:1px solid #6a7280;background:#c3c7cd;border-radius:1px"></div>
<div class="t" style="left:24.5px;top:180.7px;font-size:7.65px;color:#212934">A013 Paratyphoid fever C (Diagnosis (ICD-10), Inpatient morbidity</div>
<div class="t" style="left:24.5px;top:189.4px;font-size:7.65px;color:#212934">and mortality)</div>
<div class="t" style="left:260.8px;top:182.2px;font-size:5.3px;font-family:'Liberation Mono',monospace;color:#5f6b7c;letter-spacing:0;-webkit-text-stroke:0">Option</div>
<svg style="left:283.5px;top:177.2px" width="7.6" height="7.6" viewBox="0 0 16 16"><circle cx="8" cy="8" r="6.7" fill="none" stroke="#5e6a7b" stroke-width="1.3"/><path d="M8 7V11.6" stroke="#5e6a7b" stroke-width="1.5"/><circle cx="8" cy="4.8" r="1" fill="#5e6a7b"/></svg>
<div class="abs" style="left:11.8px;top:197.4px;width:281.7px;height:.8px;background:#eef0f3"></div>
<div class="abs" style="left:16.3px;top:204.8px;width:4.4px;height:3.8px;border:1px solid #6a7280;background:#c3c7cd;border-radius:1px"></div>
<div class="t" style="left:24.5px;top:206.7px;font-size:7.65px;color:#212934">A028 Other specified salmonella infections (Diagnosis (ICD-10),</div>
<div class="t" style="left:24.5px;top:215.4px;font-size:7.65px;color:#212934">Inpatient morbidity and mortality)</div>
<div class="t" style="left:260.8px;top:208.2px;font-size:5.3px;font-family:'Liberation Mono',monospace;color:#5f6b7c;letter-spacing:0;-webkit-text-stroke:0">Option</div>
<svg style="left:283.5px;top:203.2px" width="7.6" height="7.6" viewBox="0 0 16 16"><circle cx="8" cy="8" r="6.7" fill="none" stroke="#5e6a7b" stroke-width="1.3"/><path d="M8 7V11.6" stroke="#5e6a7b" stroke-width="1.5"/><circle cx="8" cy="4.8" r="1" fill="#5e6a7b"/></svg>
<div class="abs" style="left:11.8px;top:223.4px;width:281.7px;height:.8px;background:#eef0f3"></div>
<div class="abs" style="left:16.3px;top:230.8px;width:4.4px;height:3.8px;border:1px solid #6a7280;background:#c3c7cd;border-radius:1px"></div>
<div class="t" style="left:24.5px;top:232.7px;font-size:7.65px;color:#212934">A02 Other salmonella infections (Diagnosis (ICD-10), Inpatient</div>
<div class="t" style="left:24.5px;top:241.4px;font-size:7.65px;color:#212934">morbidity and mortality)</div>
<div class="t" style="left:260.8px;top:234.2px;font-size:5.3px;font-family:'Liberation Mono',monospace;color:#5f6b7c;letter-spacing:0;-webkit-text-stroke:0">Option</div>
<svg style="left:283.5px;top:229.2px" width="7.6" height="7.6" viewBox="0 0 16 16"><circle cx="8" cy="8" r="6.7" fill="none" stroke="#5e6a7b" stroke-width="1.3"/><path d="M8 7V11.6" stroke="#5e6a7b" stroke-width="1.5"/><circle cx="8" cy="4.8" r="1" fill="#5e6a7b"/></svg>
<div class="abs" style="left:11.8px;top:249.7px;width:281.7px;height:.8px;background:#eef0f3"></div>
<div class="abs" style="left:16.3px;top:257.1px;width:4.4px;height:3.8px;border:1px solid #6a7280;background:#c3c7cd;border-radius:1px"></div>
<div class="t" style="left:24.5px;top:259.0px;font-size:7.65px;color:#212934">A032 Shigellosis due to Shigella boydii (Diagnosis (ICD-10),</div>
<div class="t" style="left:24.5px;top:267.7px;font-size:7.65px;color:#212934">Inpatient morbidity and mortality)</div>
<div class="t" style="left:260.8px;top:260.5px;font-size:5.3px;font-family:'Liberation Mono',monospace;color:#5f6b7c;letter-spacing:0;-webkit-text-stroke:0">Option</div>
<svg style="left:283.5px;top:255.5px" width="7.6" height="7.6" viewBox="0 0 16 16"><circle cx="8" cy="8" r="6.7" fill="none" stroke="#5e6a7b" stroke-width="1.3"/><path d="M8 7V11.6" stroke="#5e6a7b" stroke-width="1.5"/><circle cx="8" cy="4.8" r="1" fill="#5e6a7b"/></svg>
<div class="abs" style="left:11.8px;top:275.7px;width:281.7px;height:.8px;background:#eef0f3"></div>
<div class="abs" style="left:16.3px;top:283.1px;width:4.4px;height:3.8px;border:1px solid #6a7280;background:#c3c7cd;border-radius:1px"></div>
<div class="t" style="left:24.5px;top:285.0px;font-size:7.65px;color:#212934">A040 Enteropathogenic Escherichia coli infection (Diagnosis (ICD-</div>
<div class="t" style="left:24.5px;top:293.7px;font-size:7.65px;color:#212934">10), Inpatient morbidity and mortality)</div>
<div class="t" style="left:260.8px;top:286.5px;font-size:5.3px;font-family:'Liberation Mono',monospace;color:#5f6b7c;letter-spacing:0;-webkit-text-stroke:0">Option</div>
<svg style="left:283.5px;top:281.5px" width="7.6" height="7.6" viewBox="0 0 16 16"><circle cx="8" cy="8" r="6.7" fill="none" stroke="#5e6a7b" stroke-width="1.3"/><path d="M8 7V11.6" stroke="#5e6a7b" stroke-width="1.5"/><circle cx="8" cy="4.8" r="1" fill="#5e6a7b"/></svg>
<div class="abs" style="left:11.8px;top:301.7px;width:281.7px;height:.8px;background:#eef0f3"></div>
<div class="abs" style="left:16.3px;top:309.1px;width:4.4px;height:3.8px;border:1px solid #6a7280;background:#c3c7cd;border-radius:1px"></div>
<div class="t" style="left:24.5px;top:311.0px;font-size:7.65px;color:#212934">A043 Enterohaemorrhagic Escherichia coli infection (Diagnosis</div>
<div class="t" style="left:24.5px;top:319.7px;font-size:7.65px;color:#212934">(ICD-10), Inpatient morbidity and mortality)</div>
<div class="t" style="left:260.8px;top:312.5px;font-size:5.3px;font-family:'Liberation Mono',monospace;color:#5f6b7c;letter-spacing:0;-webkit-text-stroke:0">Option</div>
<svg style="left:283.5px;top:307.5px" width="7.6" height="7.6" viewBox="0 0 16 16"><circle cx="8" cy="8" r="6.7" fill="none" stroke="#5e6a7b" stroke-width="1.3"/><path d="M8 7V11.6" stroke="#5e6a7b" stroke-width="1.5"/><circle cx="8" cy="4.8" r="1" fill="#5e6a7b"/></svg>
<div class="abs" style="left:11.8px;top:327.7px;width:281.7px;height:.8px;background:#eef0f3"></div>
</div>
<div class="abs" style="left:294.3px;top:102.9px;width:3.2px;height:55.7px;background:#cbcfd3;border-radius:1px"></div>
<div class="abs" style="left:302.8px;top:128.1px;width:17.4px;height:19.0px;background:#f5f7fa;border:.8px solid #d6dce5;border-radius:2.5px"></div>
<svg style="left:307.0px;top:133.1px" width="9" height="9" viewBox="0 0 16 16"><path d="M1 8H14M10 4L14 8L10 12M6.5 3.5L11 8L6.5 12.5M8.2 5L11 8L8.2 11" fill="none" stroke="#5a6575" stroke-width="1.3"/></svg>
<div class="abs" style="left:302.8px;top:152.3px;width:17.4px;height:19.0px;background:#f2f4f7;border:.8px solid #f0f2f5;border-radius:2.5px"></div>
<svg style="left:307.0px;top:157.3px" width="9" height="9" viewBox="0 0 16 16"><path d="M2 8H13M9 4L13 8L9 12" fill="none" stroke="#9aa3b0" stroke-width="1.3"/></svg>
<div class="abs" style="left:302.8px;top:176.5px;width:17.4px;height:19.0px;background:#f5f7fa;border:.8px solid #d6dce5;border-radius:2.5px"></div>
<svg style="left:307.0px;top:181.5px" width="9" height="9" viewBox="0 0 16 16"><path d="M15 8H2M6 4L2 8L6 12M9.5 3.5L5 8L9.5 12.5M7.8 5L5 8L7.8 11" fill="none" stroke="#5a6575" stroke-width="1.3"/></svg>
<div class="abs" style="left:302.8px;top:200.7px;width:17.4px;height:19.0px;background:#f2f4f7;border:.8px solid #f0f2f5;border-radius:2.5px"></div>
<svg style="left:307.0px;top:205.7px" width="9" height="9" viewBox="0 0 16 16"><path d="M14 8H3M7 4L3 8L7 12" fill="none" stroke="#9aa3b0" stroke-width="1.3"/></svg>
<div class="abs" style="left:325.7px;top:32.7px;width:286.3px;height:282.9px;border:.8px solid #e9ecf0;border-radius:2.5px;background:#fff"></div>
<div class="t" style="left:330.2px;top:44.8px;font-size:7.27px;font-weight:bold;color:#212934">Selected items</div>
<div class="abs" style="left:325.7px;top:56.9px;width:286.3px;height:.8px;background:#eef0f3"></div>
<div class="abs" style="left:330.3px;top:64.2px;width:4.4px;height:3.8px;border:1px solid #6a7280;background:#c3c7cd;border-radius:1px"></div>
<div class="t" style="left:338.9px;top:66.1px;font-size:7.65px;color:#212934">A000 Cholera due to Vibrio cholerae 01, biovar cholerae (Diagnosis</div>
<div class="t" style="left:338.9px;top:74.8px;font-size:7.65px;color:#212934">(ICD-10), Inpatient morbidity and mortality)</div>
<div class="t" style="left:575.0px;top:67.6px;font-size:5.3px;font-family:'Liberation Mono',monospace;color:#5f6b7c;letter-spacing:0;-webkit-text-stroke:0">Option</div>
<svg style="left:597.7px;top:62.6px" width="7.6" height="7.6" viewBox="0 0 16 16"><circle cx="8" cy="8" r="6.7" fill="none" stroke="#5e6a7b" stroke-width="1.3"/><path d="M8 7V11.6" stroke="#5e6a7b" stroke-width="1.5"/><circle cx="8" cy="4.8" r="1" fill="#5e6a7b"/></svg>
<div class="abs" style="left:326.5px;top:82.9px;width:281.0px;height:.8px;background:#eef0f3"></div>
<div class="abs" style="left:330.3px;top:90.3px;width:4.4px;height:3.8px;border:1px solid #6a7280;background:#c3c7cd;border-radius:1px"></div>
<div class="t" style="left:338.9px;top:92.2px;font-size:7.65px;color:#212934">A001 Cholera due to Vibrio cholerae 01, biovar eltor (Diagnosis (ICD-</div>
<div class="t" style="left:338.9px;top:100.9px;font-size:7.65px;color:#212934">10), Inpatient morbidity and mortality)</div>
<div class="t" style="left:575.0px;top:93.7px;font-size:5.3px;font-family:'Liberation Mono',monospace;color:#5f6b7c;letter-spacing:0;-webkit-text-stroke:0">Option</div>
<svg style="left:597.7px;top:88.7px" width="7.6" height="7.6" viewBox="0 0 16 16"><circle cx="8" cy="8" r="6.7" fill="none" stroke="#5e6a7b" stroke-width="1.3"/><path d="M8 7V11.6" stroke="#5e6a7b" stroke-width="1.5"/><circle cx="8" cy="4.8" r="1" fill="#5e6a7b"/></svg>
<div class="abs" style="left:326.5px;top:108.9px;width:281.0px;height:.8px;background:#eef0f3"></div>
<div class="abs" style="left:330.3px;top:116.3px;width:4.4px;height:3.8px;border:1px solid #6a7280;background:#c3c7cd;border-radius:1px"></div>
<div class="t" style="left:338.9px;top:118.2px;font-size:7.65px;color:#212934">A009 Cholera, unspecified (Diagnosis (ICD-10), Inpatient morbidity</div>
<div class="t" style="left:338.9px;top:126.9px;font-size:7.65px;color:#212934">and mortality)</div>
<div class="t" style="left:575.0px;top:119.7px;font-size:5.3px;font-family:'Liberation Mono',monospace;color:#5f6b7c;letter-spacing:0;-webkit-text-stroke:0">Option</div>
<svg style="left:597.7px;top:114.7px" width="7.6" height="7.6" viewBox="0 0 16 16"><circle cx="8" cy="8" r="6.7" fill="none" stroke="#5e6a7b" stroke-width="1.3"/><path d="M8 7V11.6" stroke="#5e6a7b" stroke-width="1.5"/><circle cx="8" cy="4.8" r="1" fill="#5e6a7b"/></svg>
<div class="abs" style="left:326.5px;top:135.2px;width:281.0px;height:.8px;background:#eef0f3"></div>
<div class="abs" style="left:330.3px;top:142.6px;width:4.4px;height:3.8px;border:1px solid #6a7280;background:#c3c7cd;border-radius:1px"></div>
<div class="t" style="left:338.9px;top:144.5px;font-size:7.65px;color:#212934">A010 Typhoid fever (Diagnosis (ICD-10), Inpatient morbidity and</div>
<div class="t" style="left:338.9px;top:153.3px;font-size:7.65px;color:#212934">mortality)</div>
<div class="t" style="left:575.0px;top:146.0px;font-size:5.3px;font-family:'Liberation Mono',monospace;color:#5f6b7c;letter-spacing:0;-webkit-text-stroke:0">Option</div>
<svg style="left:597.7px;top:141.0px" width="7.6" height="7.6" viewBox="0 0 16 16"><circle cx="8" cy="8" r="6.7" fill="none" stroke="#5e6a7b" stroke-width="1.3"/><path d="M8 7V11.6" stroke="#5e6a7b" stroke-width="1.5"/><circle cx="8" cy="4.8" r="1" fill="#5e6a7b"/></svg>
<div class="abs" style="left:326.5px;top:161.3px;width:281.0px;height:.8px;background:#eef0f3"></div>
<div class="abs" style="left:330.3px;top:168.7px;width:4.4px;height:3.8px;border:1px solid #6a7280;background:#c3c7cd;border-radius:1px"></div>
<div class="t" style="left:338.9px;top:170.6px;font-size:7.65px;color:#212934">A014 Paratyphoid fever, unspecified (Diagnosis (ICD-10), Inpatient</div>
<div class="t" style="left:338.9px;top:179.3px;font-size:7.65px;color:#212934">morbidity and mortality)</div>
<div class="t" style="left:575.0px;top:172.1px;font-size:5.3px;font-family:'Liberation Mono',monospace;color:#5f6b7c;letter-spacing:0;-webkit-text-stroke:0">Option</div>
<svg style="left:597.7px;top:167.1px" width="7.6" height="7.6" viewBox="0 0 16 16"><circle cx="8" cy="8" r="6.7" fill="none" stroke="#5e6a7b" stroke-width="1.3"/><path d="M8 7V11.6" stroke="#5e6a7b" stroke-width="1.5"/><circle cx="8" cy="4.8" r="1" fill="#5e6a7b"/></svg>
<div class="abs" style="left:326.5px;top:187.6px;width:281.0px;height:.8px;background:#eef0f3"></div>
<div class="abs" style="left:330.3px;top:195.0px;width:4.4px;height:3.8px;border:1px solid #6a7280;background:#c3c7cd;border-radius:1px"></div>
<div class="t" style="left:338.9px;top:196.9px;font-size:7.65px;color:#212934">A01 Typhoid and paratyphoid fevers (Diagnosis (ICD-10), Inpatient</div>
<div class="t" style="left:338.9px;top:205.7px;font-size:7.65px;color:#212934">morbidity and mortality)</div>
<div class="t" style="left:575.0px;top:198.4px;font-size:5.3px;font-family:'Liberation Mono',monospace;color:#5f6b7c;letter-spacing:0;-webkit-text-stroke:0">Option</div>
<svg style="left:597.7px;top:193.4px" width="7.6" height="7.6" viewBox="0 0 16 16"><circle cx="8" cy="8" r="6.7" fill="none" stroke="#5e6a7b" stroke-width="1.3"/><path d="M8 7V11.6" stroke="#5e6a7b" stroke-width="1.5"/><circle cx="8" cy="4.8" r="1" fill="#5e6a7b"/></svg>
<div class="abs" style="left:326.5px;top:213.8px;width:281.0px;height:.8px;background:#eef0f3"></div>
<div class="abs" style="left:330.3px;top:221.2px;width:4.4px;height:3.8px;border:1px solid #6a7280;background:#c3c7cd;border-radius:1px"></div>
<div class="t" style="left:338.9px;top:223.1px;font-size:7.65px;color:#212934">A020 Salmonella enteritis (Diagnosis (ICD-10), Inpatient morbidity</div>
<div class="t" style="left:338.9px;top:231.8px;font-size:7.65px;color:#212934">and mortality)</div>
<div class="t" style="left:575.0px;top:224.6px;font-size:5.3px;font-family:'Liberation Mono',monospace;color:#5f6b7c;letter-spacing:0;-webkit-text-stroke:0">Option</div>
<svg style="left:597.7px;top:219.6px" width="7.6" height="7.6" viewBox="0 0 16 16"><circle cx="8" cy="8" r="6.7" fill="none" stroke="#5e6a7b" stroke-width="1.3"/><path d="M8 7V11.6" stroke="#5e6a7b" stroke-width="1.5"/><circle cx="8" cy="4.8" r="1" fill="#5e6a7b"/></svg>
<div class="abs" style="left:326.5px;top:239.4px;width:281.0px;height:.8px;background:#eef0f3"></div>
<div class="abs" style="left:330.3px;top:246.8px;width:4.4px;height:3.8px;border:1px solid #6a7280;background:#c3c7cd;border-radius:1px"></div>
<div class="t" style="left:338.9px;top:248.7px;font-size:7.65px;color:#212934">A021 Salmonella septicaemia (Diagnosis (ICD-10), Inpatient</div>
<div class="t" style="left:338.9px;top:257.4px;font-size:7.65px;color:#212934">morbidity and mortality)</div>
<div class="t" style="left:575.0px;top:250.2px;font-size:5.3px;font-family:'Liberation Mono',monospace;color:#5f6b7c;letter-spacing:0;-webkit-text-stroke:0">Option</div>
<svg style="left:597.7px;top:245.2px" width="7.6" height="7.6" viewBox="0 0 16 16"><circle cx="8" cy="8" r="6.7" fill="none" stroke="#5e6a7b" stroke-width="1.3"/><path d="M8 7V11.6" stroke="#5e6a7b" stroke-width="1.5"/><circle cx="8" cy="4.8" r="1" fill="#5e6a7b"/></svg>
<div class="abs" style="left:326.5px;top:265.5px;width:281.0px;height:.8px;background:#eef0f3"></div>
<div class="abs" style="left:330.3px;top:272.9px;width:4.4px;height:3.8px;border:1px solid #6a7280;background:#c3c7cd;border-radius:1px"></div>
<div class="t" style="left:338.9px;top:274.8px;font-size:7.65px;color:#212934">A022 Localized salmonella infections (Diagnosis (ICD-10), Inpatient</div>
<div class="t" style="left:338.9px;top:283.6px;font-size:7.65px;color:#212934">morbidity and mortality)</div>
<div class="t" style="left:575.0px;top:276.3px;font-size:5.3px;font-family:'Liberation Mono',monospace;color:#5f6b7c;letter-spacing:0;-webkit-text-stroke:0">Option</div>
<svg style="left:597.7px;top:271.3px" width="7.6" height="7.6" viewBox="0 0 16 16"><circle cx="8" cy="8" r="6.7" fill="none" stroke="#5e6a7b" stroke-width="1.3"/><path d="M8 7V11.6" stroke="#5e6a7b" stroke-width="1.5"/><circle cx="8" cy="4.8" r="1" fill="#5e6a7b"/></svg>
<div class="abs" style="left:326.5px;top:289.9px;width:281.0px;height:.8px;background:#eef0f3"></div>
<div class="abs" style="left:325.7px;top:290.1px;width:286.3px;height:.8px;background:#e4e8ec"></div>
<div class="abs" style="left:608.5px;top:57.5px;width:3.2px;height:109.2px;background:#cbcfd3;border-radius:1px"></div>
<div class="abs" style="left:572.5px;top:295.7px;width:15.4px;height:15.4px;background:#f5f7fa;border:.8px solid #d6dce5;border-radius:2.5px"></div>
<svg style="left:575.7px;top:298.9px" width="9" height="9" viewBox="0 0 16 16"><path d="M8 14V3M4 7L8 3L12 7" fill="none" stroke="#5a6575" stroke-width="1.3"/></svg>
<div class="abs" style="left:592.3px;top:295.7px;width:15.4px;height:15.4px;background:#f5f7fa;border:.8px solid #d6dce5;border-radius:2.5px"></div>
<svg style="left:595.5px;top:298.9px" width="9" height="9" viewBox="0 0 16 16"><path d="M8 2V13M4 9L8 13L12 9" fill="none" stroke="#5a6575" stroke-width="1.3"/></svg>
<div class="abs" style="left:536.5px;top:325.1px;width:30.9px;height:19.9px;background:#fdfdfe;border:.8px solid #dfe3e8;border-radius:2.5px"></div>
<div class="t" style="left:552.0px;top:335.0px;font-size:8.2px;color:#212934;transform:translate(-50%,-50%)">Hide</div>
<div class="abs" style="left:571.7px;top:325.1px;width:41.1px;height:19.9px;background:linear-gradient(180deg,#1565c0,#0f4fa6);border:.8px solid #0d47a1;border-radius:2.5px"></div>
<div class="t" style="left:592.2px;top:335.0px;font-size:8.2px;font-weight:bold;color:#fff;transform:translate(-50%,-50%)">Update</div>
</div>
<div class="abs" id="bigicon" style="left:1126.4px;top:468.0px;width:193.2px;height:193.0px;background:#05893c;border-radius:19px;box-shadow:0 8.3px 0 #066a2d,0 37px 20px -3px rgba(20,100,55,.30)"></div>
<svg style="left:0;top:0" width="1412" height="796" viewBox="0 0 1412 796"><g fill="none" stroke="#fff"><path d="M1167 504.6V620.75H1283.2" stroke-width="8.3"/><path d="M1170.5 617L1199 556.7L1235 592.6L1271.1 528.8" stroke-width="7.2" stroke-linejoin="round"/><g fill="#05893c" stroke-width="7.6"><circle cx="1199" cy="556.7" r="7.8"/><circle cx="1235" cy="592.6" r="7.8"/><circle cx="1271.1" cy="528.8" r="7.8"/></g></g></svg>
</body></html>
